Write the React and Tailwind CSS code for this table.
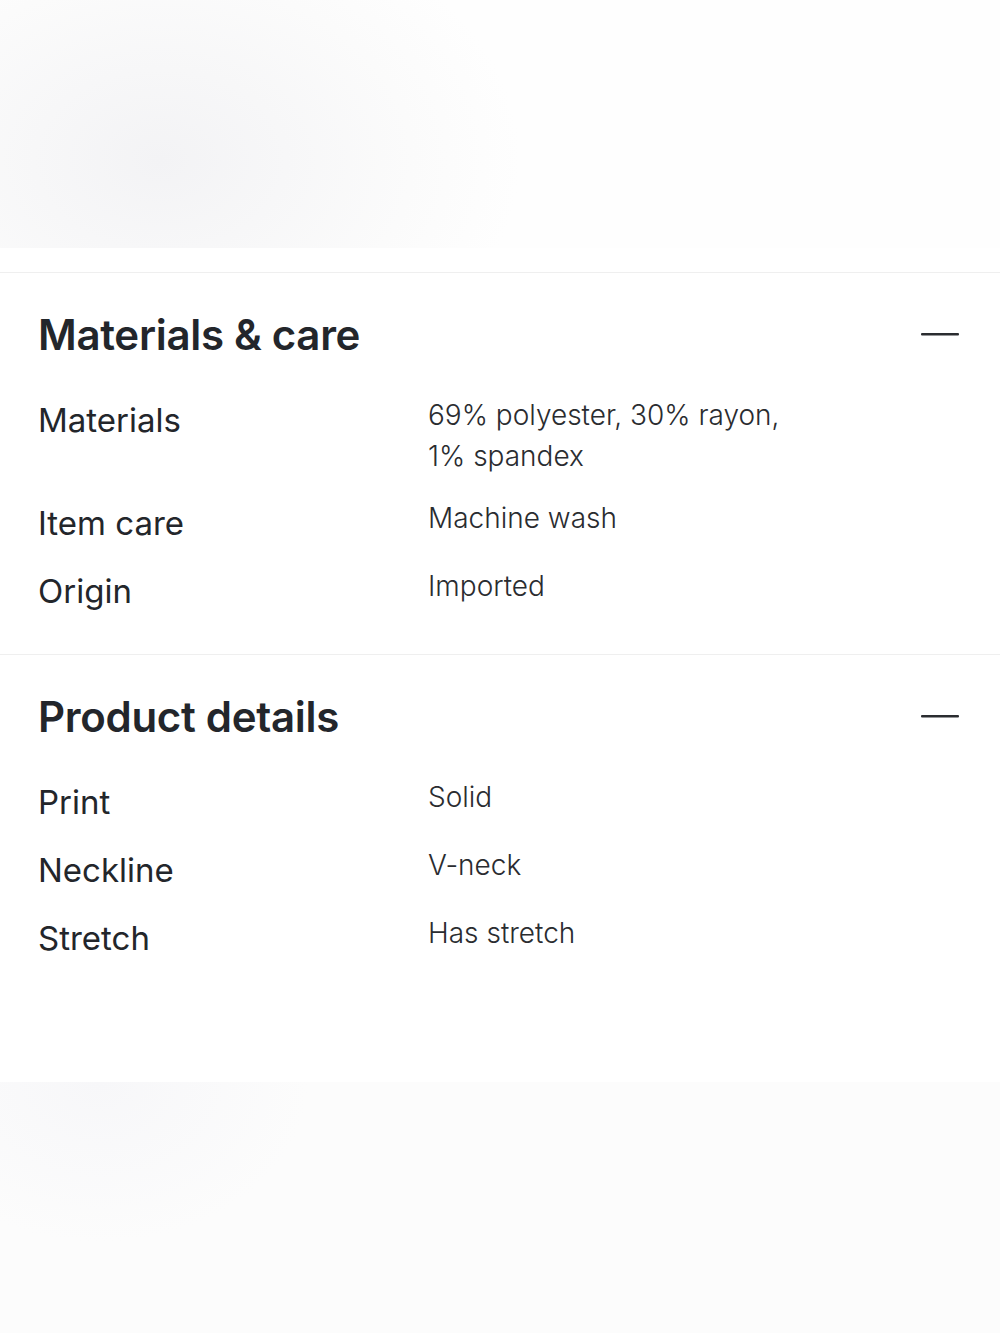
import React from "react";

function MinusIcon() {
  return (
    <svg width="40" height="4" viewBox="0 0 40 4" className="shrink-0">
      <rect x="1" y="1" width="38" height="2.4" rx="1" fill="#2a2c30" />
    </svg>
  );
}

function Section({ title, rows }) {
  return (
    <section className="border-t border-[#efefef] px-[38px] pt-[35px] pb-[41px]">
      <div className="flex items-center justify-between h-[52px]">
        <h2 className="text-[42px] font-semibold text-[#23262b] tracking-[-0.3px]">{title}</h2>
        <div className="mr-[2px]">
          <MinusIcon />
        </div>
      </div>
      <dl className="mt-[35px] flex flex-col gap-[21px]">
        {rows.map((row) => (
          <div key={row.label} className="grid grid-cols-[390px_1fr] items-start">
            <dt className="text-[33px] leading-[43px] text-[#23262b] pt-[4px]">{row.label}</dt>
            <dd className="text-[28px] leading-[41px] font-light text-[#2a2c30] max-w-[360px]">
              {row.value}
            </dd>
          </div>
        ))}
      </dl>
    </section>
  );
}

export default function App() {
  const materials = [
    { label: "Materials", value: "69% polyester, 30% rayon, 1% spandex" },
    { label: "Item care", value: "Machine wash" },
    { label: "Origin", value: "Imported" },
  ];

  const details = [
    { label: "Print", value: "Solid" },
    { label: "Neckline", value: "V-neck" },
    { label: "Stretch", value: "Has stretch" },
  ];

  return (
    <div className="w-[1000px] min-h-[1333px] bg-white font-['Inter','Liberation_Sans',sans-serif] flex flex-col">
      <div className="h-[248px] bg-[radial-gradient(ellipse_360px_260px_at_160px_160px,#f3f3f5,#fbfbfb_70%,#fefefe)]" />
      <div className="h-[24px]" />
      <Section title="Materials & care" rows={materials} />
      <Section title="Product details" rows={details} />
      <div className="h-[81px]" />
      <div className="flex-1 bg-[radial-gradient(ellipse_260px_200px_at_100px_0px,#f7f7f9,#fcfcfc_80%)]" />
    </div>
  );
}
